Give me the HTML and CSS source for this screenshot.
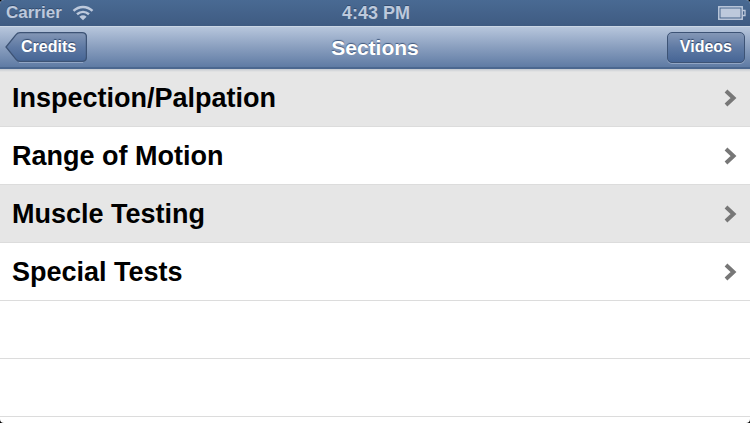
FILE: index.html
```
<!doctype html>
<html lang="en">
<head>
<meta charset="utf-8">
<meta name="viewport" content="width=device-width, initial-scale=1">
<title>Sections</title>
<link rel="stylesheet" href="styles.css">
</head>

<body>
<div class="screen">

  <div class="status">
    <div class="carrier">
      <span>Carrier</span>
      <svg class="wifi" width="22" height="16" viewBox="0 0 22 16" aria-hidden="true">
        <path d="M1.5 5.8C7 .6 15 .6 20.500 5.800M5 9.300c3.600-3.200 8.400-3.200 12 0" fill="none" stroke="currentColor" stroke-width="2.500"/>
        <path d="M7.400 11.700c2.200-1.900 5-1.900 7.200 0L11 15.300z" fill="currentColor"/>
      </svg>
    </div>
    <span>4:43 PM</span>
    <svg class="battery" width="28" height="14" viewBox="0 0 28 14" aria-hidden="true">
      <rect x=".8" y=".8" width="23.400" height="12.400" fill="none" stroke="currentColor" stroke-width="1.500"/>
      <rect x="2.500" y="2.500" width="20" height="9" fill="currentColor"/>
      <path d="M24.500 4.500H27v5h-2.500" fill="none" stroke="currentColor" stroke-width="1.300"/>
    </svg>
  </div>

  <header class="navbar">
    <button type="button" class="back">
      <svg class="back-shape" viewBox="0 0 82 31" preserveAspectRatio="none" aria-hidden="true">
        <defs>
          <linearGradient id="fill" x1="0" y1="0" x2="0" y2="1">
            <stop offset="0" stop-color="#8497b6"/>
            <stop offset=".5" stop-color="#5f7aa4"/>
            <stop offset="1" stop-color="#466595"/>
          </linearGradient>
        </defs>
        <path d="M15 .7H77Q81.300 .7 81.300 5V25Q81.300 29.300 77 29.300H15Q12.500 29.300 11 27.300L1 15L11 2.700Q12.500 .7 15 .7z" fill="url(#fill)" stroke="#3d5375" stroke-width="1.300"/>
        <path d="M14 30.500H78" stroke="#91a5c4" stroke-width="1"/>
      </svg>
      <span class="back-label">Credits</span>
    </button>
    <h1>Sections</h1>
    <button type="button" class="videos">Videos</button>
  </header>

  <ul class="list">
    <li><a href="#inspection">Inspection/Palpation <svg class="chevron" width="14" height="18" viewBox="0 0 14 18" aria-hidden="true"><path d="M2 2l7.500 7L2 16"/></svg></a></li>
    <li><a href="#motion">Range of Motion <svg class="chevron" width="14" height="18" viewBox="0 0 14 18" aria-hidden="true"><path d="M2 2l7.500 7L2 16"/></svg></a></li>
    <li><a href="#muscle">Muscle Testing <svg class="chevron" width="14" height="18" viewBox="0 0 14 18" aria-hidden="true"><path d="M2 2l7.500 7L2 16"/></svg></a></li>
    <li><a href="#special">Special Tests <svg class="chevron" width="14" height="18" viewBox="0 0 14 18" aria-hidden="true"><path d="M2 2l7.500 7L2 16"/></svg></a></li>
    <li class="empty"></li>
    <li class="empty"></li>
  </ul>

</div>
</body>
</html>
```

FILE: styles.css
```
* {
  box-sizing: border-box;
}

body {
  margin: 0;
  background: #000;
  font-family: "Liberation Sans", Arial, Helvetica, sans-serif;
  font-weight: bold;
}

/* rounded corners of the device screen */
.screen {
  min-height: 100vh;
  background: #fff;
  border-radius: 4px;
  overflow: hidden;
}

.status {
  display: grid;
  grid-template-columns: 1fr auto 1fr;
  align-items: center;
  height: 26px;
  padding: 0 4px 0 6px;
  background: linear-gradient(#496a93, #3f5b82);
  color: #bdc9dc;
  font-size: 18px;
  line-height: 26px;
  text-shadow: 0 -1px 0 #344d70;
}

.carrier {
  display: flex;
  align-items: center;
  gap: 10px;
  font-size: 17px;
}

.battery {
  justify-self: end;
}

.navbar {
  display: grid;
  grid-template-columns: 1fr auto 1fr;
  align-items: center;
  height: 43px;
  padding: 0 5px;
  background: linear-gradient(#b7c6dc, #8a9fbf 50%, #5f7ba4);
  border-top: 1px solid #cbd6e5;
  border-bottom: 2px solid #4b678f;
}

.navbar h1 {
  margin: 0;
  padding-top: 2px;
  color: #fff;
  font-size: 21px;
  line-height: 38px;
  text-shadow: 0 -1px 1px #40597e;
}

button {
  height: 31px;
  color: #fff;
  font: bold 16px/28px "Liberation Sans", Arial, Helvetica, sans-serif;
  text-shadow: 0 -1px 1px #2f4568;
}

.back {
  position: relative;
  justify-self: start;
  padding: 0 11px 0 16px;
  border: 0;
  background: none;
}

.back-shape {
  position: absolute;
  top: 0;
  left: 0;
  width: 100%;
  height: 100%;
}

.back-label {
  position: relative;
}

.videos {
  justify-self: end;
  padding: 0 12px;
  border: 1px solid #3d5375;
  border-radius: 5px;
  background: linear-gradient(#8497b6, #5f7aa4 50%, #466595);
  box-shadow: 0 1px 0 #91a5c4;
}

.list {
  margin: 0;
  padding: 0;
  list-style: none;
}

.list li {
  height: 58px;
  border-bottom: 1px solid #dcdcdc;
}

.list li:nth-child(odd):not(.empty) {
  background: #e6e6e6;
}

/* shadow cast by the navbar */
.list li:first-child:not(.empty) {
  background: linear-gradient(#c4c9d0, #e6e6e6 3px);
}

.list a {
  display: flex;
  align-items: center;
  justify-content: space-between;
  height: 58px;
  padding: 0 12px;
  color: #000;
  font-size: 27px;
  text-decoration: none;
}

.chevron {
  fill: none;
  stroke: #777;
  stroke-width: 4;
}
```
